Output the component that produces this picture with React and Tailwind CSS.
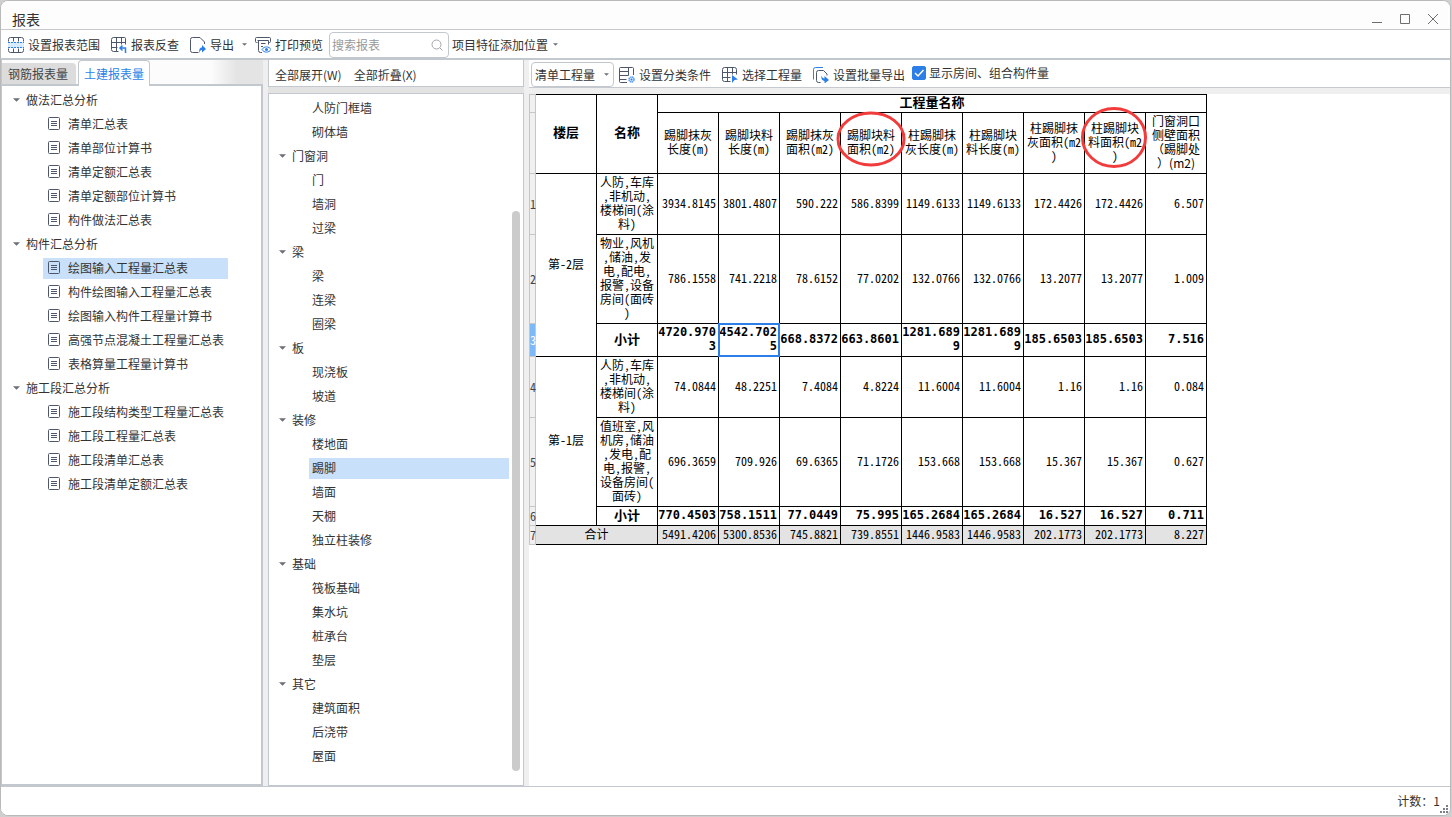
import { clsx } from 'clsx';

const reportGroups = [
    {
        name: '做法汇总分析',
        items: ['清单汇总表', '清单部位计算书', '清单定额汇总表', '清单定额部位计算书', '构件做法汇总表'],
    },
    {
        name: '构件汇总分析',
        items: [
            '绘图输入工程量汇总表',
            '构件绘图输入工程量汇总表',
            '绘图输入构件工程量计算书',
            '高强节点混凝土工程量汇总表',
            '表格算量工程量计算书',
        ],
    },
    {
        name: '施工段汇总分析',
        items: ['施工段结构类型工程量汇总表', '施工段工程量汇总表', '施工段清单汇总表', '施工段清单定额汇总表'],
    },
];

// The first group is scrolled past its own heading
const componentGroups = [
    { name: null, items: ['人防门框墙', '砌体墙'] },
    { name: '门窗洞', items: ['门', '墙洞', '过梁'] },
    { name: '梁', items: ['梁', '连梁', '圈梁'] },
    { name: '板', items: ['现浇板', '坡道'] },
    { name: '装修', items: ['楼地面', '踢脚', '墙面', '天棚', '独立柱装修'] },
    { name: '基础', items: ['筏板基础', '集水坑', '桩承台', '垫层'] },
    { name: '其它', items: ['建筑面积', '后浇带', '屋面'] },
];

const quantityColumns = [
    '踢脚抹灰\n长度(m)',
    '踢脚块料\n长度(m)',
    '踢脚抹灰\n面积(m2)',
    '踢脚块料\n面积(m2)',
    '柱踢脚抹\n灰长度(m)',
    '柱踢脚块\n料长度(m)',
    '柱踢脚抹\n灰面积(m2\n)',
    '柱踢脚块\n料面积(m2\n)',
    '门窗洞口\n侧壁面积\n（踢脚处\n）(m2)',
];

const rows = [
    {
        floor: '第-2层',
        height: 'h-[61px]',
        name: '人防,车库\n,非机动,\n楼梯间(涂\n料)',
        values: ['3934.8145', '3801.4807', '590.222', '586.8399', '1149.6133', '1149.6133', '172.4426', '172.4426', '6.507'],
    },
    {
        height: 'h-[89px]',
        name: '物业,风机\n,储油,发\n电,配电,\n报警,设备\n房间(面砖\n)',
        values: ['786.1558', '741.2218', '78.6152', '77.0202', '132.0766', '132.0766', '13.2077', '13.2077', '1.009'],
    },
    {
        height: 'h-[33px]',
        name: '小计',
        bold: true,
        current: true,
        values: ['4720.970\n3', '4542.702\n5', '668.8372', '663.8601', '1281.689\n9', '1281.689\n9', '185.6503', '185.6503', '7.516'],
    },
    {
        floor: '第-1层',
        height: 'h-[61px]',
        name: '人防,车库\n,非机动,\n楼梯间(涂\n料)',
        values: ['74.0844', '48.2251', '7.4084', '4.8224', '11.6004', '11.6004', '1.16', '1.16', '0.084'],
    },
    {
        height: 'h-[89px]',
        name: '值班室,风\n机房,储油\n,发电,配\n电,报警,\n设备房间(\n面砖)',
        values: ['696.3659', '709.926', '69.6365', '71.1726', '153.668', '153.668', '15.367', '15.367', '0.627'],
    },
    {
        height: 'h-[19px]',
        name: '小计',
        bold: true,
        values: ['770.4503', '758.1511', '77.0449', '75.995', '165.2684', '165.2684', '16.527', '16.527', '0.711'],
    },
];

const totals = ['5491.4206', '5300.8536', '745.8821', '739.8551', '1446.9583', '1446.9583', '202.1773', '202.1773', '8.227'];

function Caret({ className }) {
    return (
        <svg viewBox="0 0 8 4" className={clsx('shrink-0 fill-[#6b6f76]', className)} aria-hidden="true">
            <path d="M0 0h8L4 4z" />
        </svg>
    );
}

function Icon({ children }) {
    return (
        <svg viewBox="0 0 16 16" fill="none" stroke="#4d566b" className="size-4 shrink-0" aria-hidden="true">
            {children}
        </svg>
    );
}

function RangeIcon() {
    return (
        <Icon>
            <path d="M0 5h16v6H0z" fill="#d9ebff" stroke="none" />
            <path d="M.5 4.5V2.5a2 2 0 0 1 2-2h11a2 2 0 0 1 2 2v2M.5 11.5v2a2 2 0 0 0 2 2h11a2 2 0 0 0 2-2v-2M5.5.5v4M10.5.5v4M5.5 11.5v4M10.5 11.5v4" />
            <path d="M0 5.5h16M0 10.5h16" stroke="#2b7fe6" strokeDasharray="2 1" />
        </Icon>
    );
}

function CheckBackIcon() {
    return (
        <Icon>
            <path d="M7.5 14.5h-5a2 2 0 0 1-2-2v-10a2 2 0 0 1 2-2h11a1 1 0 0 1 1 1v6M.5 5.5h14M.5 10.5h6M5.5.5v14M10.5.5v7" />
            <path d="M11.5 8.5l-2.5 2.5 2.5 2.5M9 11h5.5v5" stroke="#2b7fe6" strokeWidth="1.5" />
        </Icon>
    );
}

function ExportIcon() {
    return (
        <Icon>
            <path d="M8.5 15.5h-6a2 2 0 0 1-2-2v-11a2 2 0 0 1 2-2h7.5l4.5 4.5v2" />
            <path d="M9 16c0-4 1-5.500 3-5.500V8l4 4-4 3.500v-2.500c-1.500 0-2.200 1-3 3z" fill="#2b7fe6" stroke="none" />
        </Icon>
    );
}

function PreviewIcon() {
    return (
        <Icon>
            <path d="M2.5 5.5h-1a1 1 0 0 1-1-1v-3a1 1 0 0 1 1-1h13a1 1 0 0 1 1 1v3a1 1 0 0 1-1 1h-1M2.5 3.5h11v4M3.5 3.5v10a2 2 0 0 0 2 2h1.5M6 6.5h4.5M6 9.5h2" />
            <path d="M7 12.500c2-3.500 7-3.500 9 0-2 3.500-7 3.500-9 0z" fill="#fff" stroke="#2b7fe6" />
            <circle cx="11.5" cy="12.5" r="1.5" fill="#2b7fe6" stroke="none" />
        </Icon>
    );
}

function ClassifyIcon() {
    return (
        <Icon>
            <path d="M8 15.5H1.5a1 1 0 0 1-1-1v-13a1 1 0 0 1 1-1h12a1 1 0 0 1 1 1v6.5M9.5.5v8M.5 4.5h9M.5 8.5h9M.5 12.5h7" />
            <circle cx="12.5" cy="12.5" r="2.5" fill="#d9ebff" stroke="#5b9df0" strokeWidth="1.5" strokeDasharray="1.5 .5" />
            <circle cx="12.5" cy="12.5" r="1" fill="#2b7fe6" stroke="none" />
        </Icon>
    );
}

function PickIcon() {
    return (
        <Icon>
            <path d="M8.5 14.5h-6a2 2 0 0 1-2-2v-10a2 2 0 0 1 2-2h10a2 2 0 0 1 2 2v5M.5 5.5h14M.5 10.5h8M5.5.5v14M10.5.5v7" />
            <path d="M10 8l6 4.500-3.500.5-2.500 3z" fill="#2b7fe6" stroke="none" />
        </Icon>
    );
}

function BatchIcon() {
    return (
        <Icon>
            <path d="M.5 12.5v-10a2 2 0 0 1 2-2h7.5" stroke="#2b7fe6" />
            <path d="M7.5 15.5h-2a2 2 0 0 1-2-2v-8a2 2 0 0 1 2-2h5l3.5 3.5v1.5" />
            <path d="M8.500 8.500c.5 2 1.500 3 3 3V9l4.500 4-4.500 3.500v-2.500c-2.500 0-3.500-2-3-5.500z" fill="#2b7fe6" stroke="none" />
        </Icon>
    );
}

function DocIcon() {
    return (
        <svg viewBox="0 0 12 14" fill="none" stroke="#4d566b" className="h-3.5 w-3 shrink-0" aria-hidden="true">
            <rect x=".5" y=".5" width="11" height="12" rx="1" />
            <path d="M3 4.5h6M3 6.5h6M3 8.5h6" />
        </svg>
    );
}

function ToolButton({ icon, children }) {
    return (
        <button type="button" className="flex items-center gap-1 whitespace-nowrap">
            {icon}
            {children}
        </button>
    );
}

function TitleBar() {
    return (
        <header className="flex h-[29px] shrink-0 items-end justify-between border-b border-[#c6c9ce] bg-[#fdfdfd] pr-[11px] pl-[11px]">
            <h1 className="text-sm leading-5">报表</h1>
            <div className="flex gap-4 pb-1 text-[#6e6e6e]">
                <button type="button" aria-label="最小化">
                    <svg viewBox="0 0 12 12" className="size-3" stroke="currentColor">
                        <path d="M1 9.5h10" />
                    </svg>
                </button>
                <button type="button" aria-label="最大化">
                    <svg viewBox="0 0 12 12" className="size-3" stroke="currentColor" fill="none">
                        <path d="M1.5 1.5h9v9h-9z" />
                    </svg>
                </button>
                <button type="button" aria-label="关闭">
                    <svg viewBox="0 0 12 12" className="size-3" stroke="currentColor">
                        <path d="M1 1l10 10M11 1L1 11" />
                    </svg>
                </button>
            </div>
        </header>
    );
}

function Toolbar() {
    return (
        <div className="flex h-[30px] shrink-0 items-center border-b-2 border-[#c3c7ce] pt-px pl-[7px]">
            <div className="flex items-center gap-[11px]">
                <ToolButton icon={<RangeIcon />}>设置报表范围</ToolButton>
                <ToolButton icon={<CheckBackIcon />}>报表反查</ToolButton>
                <ToolButton icon={<ExportIcon />}>导出</ToolButton>
            </div>
            <button type="button" aria-label="导出选项" className="px-2">
                <Caret className="h-[3px] w-[5px]" />
            </button>
            <ToolButton icon={<PreviewIcon />}>打印预览</ToolButton>
            <div className="relative ml-1.5">
                <input
                    type="text"
                    aria-label="搜索报表"
                    placeholder="搜索报表"
                    className="h-[26px] w-[120px] rounded border border-[#c3c7ce] bg-white pr-5 pl-0.5 placeholder:text-[#999]"
                />
                <svg viewBox="0 0 12 12" fill="none" stroke="#a3a6ab" className="absolute top-[7px] right-1.5 size-3" aria-hidden="true">
                    <circle cx="5.5" cy="5.5" r="4.5" />
                    <path d="M9 9l2.5 2.5" />
                </svg>
            </div>
            <button type="button" className="flex items-center gap-[5px] pl-[3px] whitespace-nowrap">
                项目特征添加位置
                <Caret className="h-[3px] w-[5px]" />
            </button>
        </div>
    );
}

function GroupHeading({ children, className }) {
    return (
        <button type="button" aria-expanded="true" className={clsx('flex h-6 w-full items-center gap-1.5', className)}>
            <Caret className="h-1 w-[7px]" />
            {children}
        </button>
    );
}

function ReportPanel() {
    return (
        <aside className="flex w-[261px] shrink-0 flex-col">
            <div
                role="tablist"
                className="flex h-[26px] shrink-0 items-end border-b-2 border-[#c3c7ce] bg-linear-to-r from-[#fcfcfc] from-80% to-[#e4e4e4] to-90%"
            >
                <button type="button" role="tab" aria-selected="false" className="h-[21px] w-[74px] rounded-tr bg-[#dcdcdc] pl-1.5 text-left text-[#444]">
                    钢筋报表量
                </button>
                <button
                    type="button"
                    role="tab"
                    aria-selected="true"
                    className="-mb-0.5 ml-0.5 h-[26px] w-[72px] rounded-t border border-b-0 border-[#c3c7ce] bg-white text-[#2b7fe6]"
                >
                    土建报表量
                </button>
            </div>
            <nav className="flex-1 border-r-2 border-b-2 border-[#c3c7ce] pt-0.5">
                {reportGroups.map((group) => (
                    <div key={group.name}>
                        <GroupHeading className="pl-[11px]">{group.name}</GroupHeading>
                        {group.items.map((item) => (
                            <div key={item} className="flex h-6 items-center pl-[41px]">
                                <button
                                    type="button"
                                    className={clsx(
                                        'flex h-[21px] w-[185px] items-center gap-2 pl-[5px] whitespace-nowrap',
                                        item === '绘图输入工程量汇总表' && 'bg-[#c9e0fa]',
                                    )}
                                >
                                    <DocIcon />
                                    {item}
                                </button>
                            </div>
                        ))}
                    </div>
                ))}
            </nav>
        </aside>
    );
}

function ComponentPanel() {
    return (
        <aside className="flex w-64 shrink-0 flex-col">
            <div className="flex h-[27px] shrink-0 items-center gap-3 border-x border-b border-[#c3c7ce] bg-white px-1.5 pt-1">
                <button type="button">全部展开(W)</button>
                <button type="button">全部折叠(X)</button>
            </div>
            <div className="h-1.5 shrink-0 bg-[#e3e3e3]" />
            <nav className="flex flex-1 justify-between border border-[#c3c7ce] bg-white pr-[3px] pt-0.5">
                <div className="w-60">
                    {componentGroups.map((group) => (
                        <div key={group.name ?? 'scrolled'}>
                            {group.name && <GroupHeading className="pl-2.5">{group.name}</GroupHeading>}
                            {group.items.map((item) => (
                                <div key={item} className="flex h-6 items-center pl-10">
                                    <button
                                        type="button"
                                        className={clsx('h-[21px] w-[200px] pl-[3px] text-left', item === '踢脚' && 'bg-[#c9e0fa]')}
                                    >
                                        {item}
                                    </button>
                                </div>
                            ))}
                        </div>
                    ))}
                </div>
                {/* Scrollbar */}
                <div className="flex flex-col pt-[115px] pb-3.5">
                    <div className="w-2 flex-1 rounded-full bg-[#cbcbcb]" />
                </div>
            </nav>
        </aside>
    );
}

function RowNumber({ children, current }) {
    return (
        <th
            scope="row"
            className={clsx(
                "border-r border-b border-l border-[#c6c6c6] text-left align-middle font-normal [font-feature-settings:'hwid']",
                current ? 'bg-[#7db8f7] text-white' : 'bg-[#f0f0f0] text-[#444]',
            )}
        >
            {children}
        </th>
    );
}

const cell = 'border-r border-b border-black whitespace-pre';

function QuantityTable() {
    return (
        <div className="relative w-fit">
            <table className="w-[678px] table-fixed border-separate border-spacing-0 bg-white leading-[14px] text-black">
                <colgroup>
                    <col className="w-[7px]" />
                    {Array.from({ length: 11 }, (_, i) => (
                        <col key={i} className="w-[61px]" />
                    ))}
                </colgroup>
                <thead>
                    <tr className="h-[19px]">
                        <td className="border border-[#c6c6c6] bg-[#f0f0f0]" />
                        <th rowSpan={2} className={clsx(cell, 'border-t pb-1 text-[13px]')}>楼层</th>
                        <th rowSpan={2} className={clsx(cell, 'border-t pb-1 text-[13px]')}>名称</th>
                        <th colSpan={9} className={clsx(cell, 'border-t pb-[3px] text-[13px]')}>工程量名称</th>
                    </tr>
                    <tr className="h-[61px]">
                        <td className="border-x border-b border-[#c6c6c6] bg-[#f0f0f0]" />
                        {quantityColumns.map((label) => (
                            // full-width brackets must keep their full advance
                            <th
                                key={label}
                                className={clsx(cell, 'pb-0.5 font-normal', !label.includes('（') && "[font-feature-settings:'hwid']")}
                            >
                                {label}
                            </th>
                        ))}
                    </tr>
                </thead>
                <tbody>
                    {rows.map((row, i) => (
                        <tr key={i} className={row.height}>
                            <RowNumber current={row.current}>{i + 1}</RowNumber>
                            {row.floor && (
                                <td rowSpan={3} className={clsx(cell, "pb-0.5 text-center [font-feature-settings:'hwid']")}>
                                    {row.floor}
                                </td>
                            )}
                            <td
                                className={clsx(
                                    cell,
                                    'pb-0.5 text-center',
                                    row.bold ? 'text-[13px] font-bold' : "[font-feature-settings:'hwid']",
                                )}
                            >
                                {row.name}
                            </td>
                            {row.values.map((value, j) => (
                                <td
                                    key={j}
                                    className={clsx(
                                        cell,
                                        'relative pr-0.5 pb-0.5 text-right',
                                        row.bold
                                            ? "font-['DejaVu_Sans_Mono',monospace] font-bold"
                                            : "[font-feature-settings:'hwid']",
                                    )}
                                >
                                    {value}
                                    {row.current && j === 1 && (
                                        <span className="absolute -inset-px border-2 border-[#2b7fe6]" />
                                    )}
                                </td>
                            ))}
                        </tr>
                    ))}
                </tbody>
                <tfoot>
                    <tr className="h-[19px] bg-[#e3e3e3]">
                        <RowNumber>7</RowNumber>
                        <td colSpan={2} className={clsx(cell, 'pb-0.5 text-center')}>合计</td>
                        {totals.map((value, j) => (
                            <td key={j} className={clsx(cell, "pr-0.5 pb-0.5 text-right [font-feature-settings:'hwid']")}>
                                {value}
                            </td>
                        ))}
                    </tr>
                </tfoot>
            </table>
            {/* Hand-drawn marks over the two block-tile area columns */}
            <svg
                viewBox="0 0 678 80"
                fill="none"
                stroke="#f23c3c"
                strokeWidth="3"
                className="pointer-events-none absolute top-0 left-0 h-20 w-[678px]"
                aria-hidden="true"
            >
                <ellipse cx="342" cy="45" rx="33" ry="26" />
                <ellipse cx="585" cy="43.5" rx="31.5" ry="29" />
            </svg>
        </div>
    );
}

function ReportView() {
    return (
        <main className="flex min-w-0 flex-1 flex-col">
            <div className="flex h-7 shrink-0 items-center gap-[11px] border-b border-[#c6c9ce] bg-white pt-0.5 pl-0.5">
                <div className="flex items-center gap-[5px]">
                    <div className="relative">
                        <select
                            aria-label="工程量类型"
                            className="h-[25px] w-[83px] appearance-none rounded border border-[#c3c7ce] bg-white pl-[3px]"
                        >
                            <option>清单工程量</option>
                        </select>
                        <Caret className="pointer-events-none absolute top-[11px] right-[5px] h-[3px] w-[5px]" />
                    </div>
                    <ToolButton icon={<ClassifyIcon />}>设置分类条件</ToolButton>
                </div>
                <ToolButton icon={<PickIcon />}>选择工程量</ToolButton>
                <div className="flex items-center gap-[7px]">
                    <ToolButton icon={<BatchIcon />}>设置批量导出</ToolButton>
                    <label className="flex items-center gap-[3px] pb-[3px] whitespace-nowrap">
                        <span className="relative flex">
                            <input type="checkbox" defaultChecked className="peer size-3.5 appearance-none rounded-xs border border-[#2b7fe6] checked:bg-[#2b7fe6]" />
                            <svg
                                viewBox="0 0 14 14"
                                fill="none"
                                stroke="#fff"
                                strokeWidth="1.5"
                                className="pointer-events-none absolute inset-0 hidden size-3.5 peer-checked:block"
                                aria-hidden="true"
                            >
                                <path d="M3 7l3 3 5.5-6" />
                            </svg>
                        </span>
                        显示房间、组合构件量
                    </label>
                </div>
            </div>
            <div className="h-1.5 shrink-0 bg-[#efefef]" />
            <div className="flex-1 bg-white">
                <QuantityTable />
            </div>
        </main>
    );
}

function StatusBar() {
    return (
        <footer className="flex h-[29px] shrink-0 items-center justify-end border-t border-[#c3c7ce] bg-white pr-0.5">
            <span>计数：1</span>
            <svg viewBox="0 0 8 8" className="size-2 translate-y-2 fill-[#7b8088]" aria-hidden="true">
                <path d="M6 0h2v2H6zM3 3h2v2H3zM6 3h2v2H6zM0 6h2v2H0zM3 6h2v2H3zM6 6h2v2H6z" />
            </svg>
        </footer>
    );
}

export default function App() {
    return (
        <div className="flex h-screen flex-col bg-[#cfcfcf] pr-px pb-px font-['Noto_Sans_CJK_SC',sans-serif] text-xs text-[#333]">
            <div className="flex min-h-0 flex-1 flex-col overflow-hidden rounded-lg border border-[#b9b9b9] bg-white">
                <TitleBar />
                <Toolbar />
                <div className="flex min-h-0 flex-1 gap-[5px] border-l border-[#c3c7ce] bg-[#efefef]">
                    <div className="flex bg-white">
                        <ReportPanel />
                    </div>
                    <ComponentPanel />
                    <ReportView />
                </div>
                <StatusBar />
            </div>
        </div>
    );
}
